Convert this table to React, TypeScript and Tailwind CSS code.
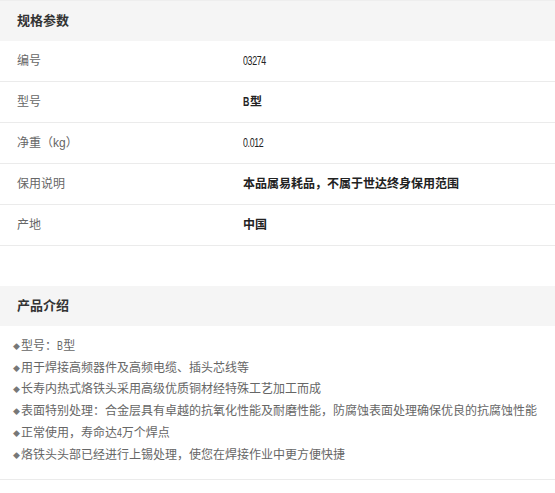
import React from "react";

const specs: { label: string; value: React.ReactNode }[] = [
  { label: "编号", value: <Num>03274</Num> },
  {
    label: "型号",
    value: (
      <span className="font-bold">
        <Num>B</Num>型
      </span>
    ),
  },
  { label: "净重（kg）", value: <Num>0.012</Num> },
  {
    label: "保用说明",
    value: <span className="font-bold">本品属易耗品，不属于世达终身保用范围</span>,
  },
  { label: "产地", value: <span className="font-bold">中国</span> },
];

const intro: React.ReactNode[] = [
  <>
    型号：<Num>B</Num>型
  </>,
  "用于焊接高频器件及高频电缆、插头芯线等",
  "长寿内热式烙铁头采用高级优质铜材经特殊工艺加工而成",
  "表面特别处理：合金层具有卓越的抗氧化性能及耐磨性能，防腐蚀表面处理确保优良的抗腐蚀性能",
  <>
    正常使用，寿命达<Num>4</Num>万个焊点
  </>,
  "烙铁头头部已经进行上锡处理，使您在焊接作业中更方便快捷",
];

// narrow digits like the original condensed face
function Num({ children }: { children: React.ReactNode }) {
  return (
    <span className="inline-block text-[13px] tracking-[-0.5px] scale-x-[0.68] origin-left mr-[-2px]">
      {children}
    </span>
  );
}

export default function App() {
  return (
    <div
      className="w-[555px] h-[493px] bg-white text-[12px] text-[#333]"
      style={{ fontFamily: '"Liberation Sans", "Noto Sans CJK SC", sans-serif' }}
    >
      {/* Specs */}
      <section>
        <div className="h-[41px] border-t border-[#eeeeee] bg-[#f5f5f5] flex items-center pl-[17px] text-[13px] font-bold">
          规格参数
        </div>
        {specs.map((s) => (
          <div key={s.label} className="h-[41px] flex items-center border-b border-[#ebebeb]">
            <div className="w-[243px] pl-[17px] text-[#666]">{s.label}</div>
            <div className="text-[#222]">{s.value}</div>
          </div>
        ))}
      </section>

      {/* Intro */}
      <section className="mt-[40px]">
        <div className="h-[40px] bg-[#f5f5f5] flex items-center pl-[17px] text-[13px] font-bold">
          产品介绍
        </div>
        <ul className="pt-[9px] pb-[13px] pl-[13px] border-b border-[#ebebeb] text-[#666]">
          {intro.map((t, i) => (
            <li key={i} className="flex items-center leading-[21.5px]">
              <span className="text-[7px] text-[#777] mr-[1px]">◆</span>
              <span>{t}</span>
            </li>
          ))}
        </ul>
      </section>
    </div>
  );
}
